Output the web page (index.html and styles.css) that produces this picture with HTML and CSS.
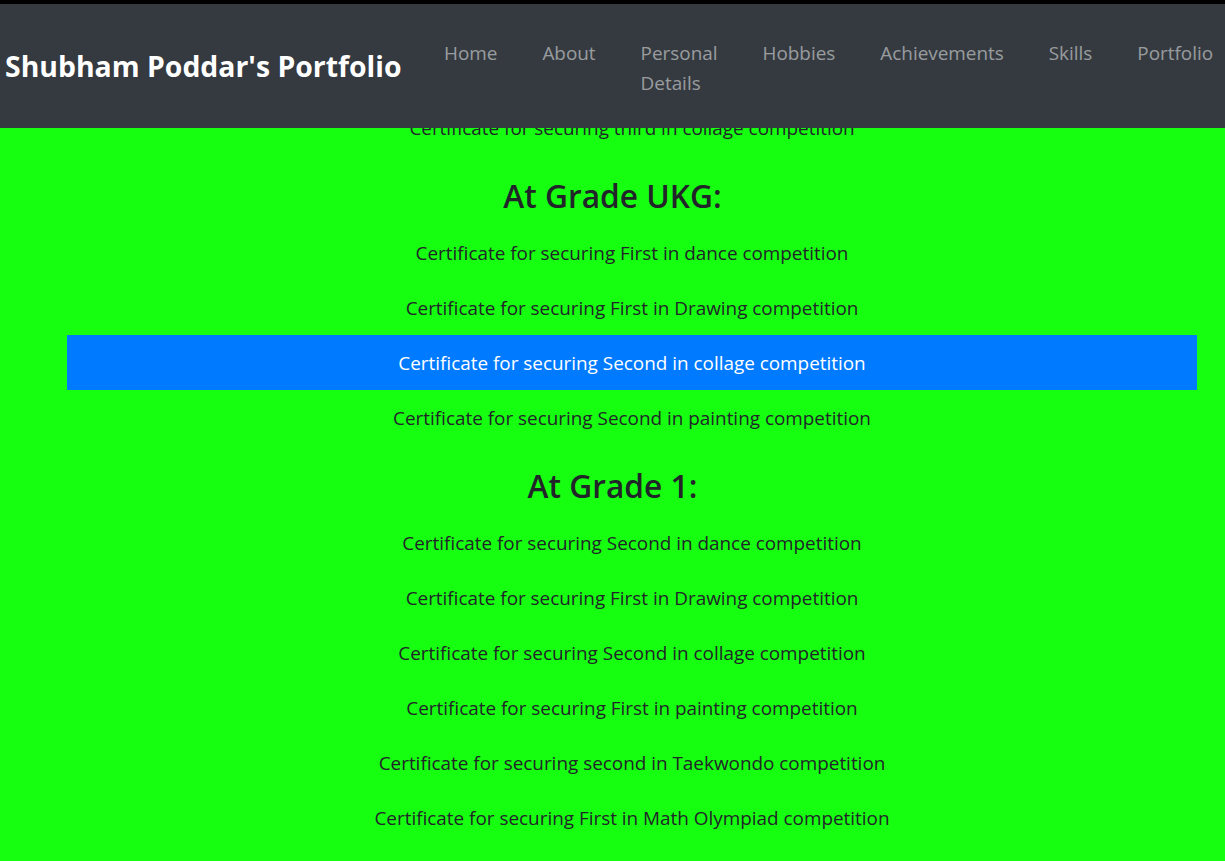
FILE: index.html
```html
<!DOCTYPE html>
<html lang="en">
<head>
<meta charset="utf-8">
<title>Shubham Poddar's Portfolio</title>
<link rel="stylesheet" href="styles.css">
</head>
<body>
<nav class="navbar">
  <a class="brand" href="#">Shubham Poddar's Portfolio</a>
  <ul class="nav">
    <li><a href="#">Home</a></li>
    <li><a href="#">About</a></li>
    <li><a href="#">Personal Details</a></li>
    <li><a href="#">Hobbies</a></li>
    <li><a href="#">Achievements</a></li>
    <li><a href="#">Skills</a></li>
    <li><a href="#">Portfolio</a></li>
  </ul>
</nav>
<main class="content">
  <ul class="list">
    <li class="item">Certificate for securing third in collage competition</li>
  </ul>
  <h2 class="grade">At Grade UKG:</h2>
  <ul class="list">
    <li class="item">Certificate for securing First in dance competition</li>
    <li class="item">Certificate for securing First in Drawing competition</li>
    <li class="item active">Certificate for securing Second in collage competition</li>
    <li class="item">Certificate for securing Second in painting competition</li>
  </ul>
  <h2 class="grade">At Grade 1:</h2>
  <ul class="list">
    <li class="item">Certificate for securing Second in dance competition</li>
    <li class="item">Certificate for securing First in Drawing competition</li>
    <li class="item">Certificate for securing Second in collage competition</li>
    <li class="item">Certificate for securing First in painting competition</li>
    <li class="item">Certificate for securing second in Taekwondo competition</li>
    <li class="item">Certificate for securing First in Math Olympiad competition</li>
  </ul>
</main>
</body>
</html>
```
FILE: styles.css
```css
* { box-sizing: border-box; }
html, body { margin: 0; padding: 0; }
body {
  background: #16ff10;
  color: #212529;
  font-family: "Open Sans", "Noto Sans", sans-serif;
  overflow: hidden;
}
.navbar {
  position: fixed;
  top: 0;
  left: 0;
  right: 0;
  z-index: 10;
  height: 128px;
  background: #343a40;
  border-top: 4px solid #000;
  display: flex;
  align-items: center;
  justify-content: space-between;
  padding: 0 0 0 5px;
}
.brand {
  color: #fff;
  text-decoration: none;
  font-weight: 700;
  font-size: 28.4px;
  line-height: 38px;
  white-space: nowrap;
}
.nav {
  list-style: none;
  margin: 0;
  padding: 4px 0 0 20px;
  display: flex;
  align-items: flex-start;
}
.nav li a {
  display: block;
  width: min-content;
  white-space: normal;
  padding: 0 22.5px;
  color: rgba(255,255,255,.5);
  text-decoration: none;
  font-size: 18.9px;
  line-height: 30px;
}
.nav li:last-child a { padding-right: 13px; }
.content {
  padding-top: 100px;
}
.list {
  list-style: none;
  margin: 0 28px 0 67px;
  padding: 0;
}
.item {
  height: 55px;
  display: flex;
  align-items: center;
  justify-content: center;
  font-size: 18.9px;
}
.item.active {
  background: #007bff;
  color: #fff;
}
.grade {
  margin: 0;
  padding: 21px 0 9px;
  height: 70px;
  text-align: center;
  font-size: 31.7px;
  line-height: 40px;
  font-weight: 600;
}
```
